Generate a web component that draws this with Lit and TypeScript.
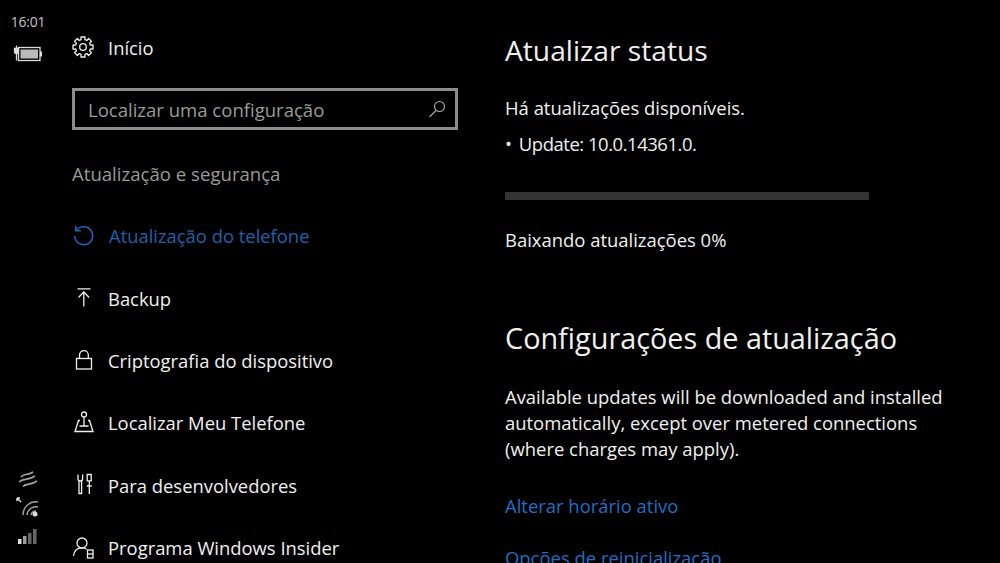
import { LitElement, html, css, svg } from "lit";
import { customElement } from "lit/decorators.js";

const ic = (w: number, h: number, body: unknown, cls = "") => html`<svg class=${cls} width=${w} height=${h} viewBox="0 0 ${w} ${h}" fill="none" stroke="currentColor" stroke-width="1.300">${body}</svg>`;

const gearPath = (() => {
  const pts: string[] = [];
  const n = 8;
  for (let i = 0; i < n; i++) {
    const a = (i * 2 * Math.PI) / n - Math.PI / 2;
    const seq: [number, number][] = [[7.6, -0.26], [10.2, -0.2], [10.2, 0.2], [7.6, 0.26]];
    for (const [r, d] of seq) {
      pts.push(`${(11 + r * Math.cos(a + d)).toFixed(2)} ${(11 + r * Math.sin(a + d)).toFixed(2)}`);
    }
  }
  return `M${pts.join("L")}Z`;
})();
const gear = ic(22, 22, svg`<circle cx="11" cy="11" r="3.300"/><path d=${gearPath} stroke-linejoin="round"/>`);

const items = [
  { label: "Atualização do telefone", active: true, icon: ic(24, 24, svg`<path d="M4.500 6.300A9 9 0 1 1 2.700 12" stroke-width="1.600"/><path d="M3.800 1.800v4.900h5" stroke-width="1.600"/>`) },
  { label: "Backup", icon: ic(24, 24, svg`<path d="M5.500 2.800h13M11.800 20.500V6M6.500 11.500 11.800 6l5.300 5.500"/>`) },
  { label: "Criptografia do dispositivo", icon: ic(24, 24, svg`<rect x="4.500" y="10.500" width="15" height="10.500"/><path d="M7.500 10.500V7a4.300 4.300 0 0 1 8.800 0v3.500"/>`) },
  { label: "Localizar Meu Telefone", icon: ic(24, 24, svg`<circle cx="12" cy="3.500" r="2.500"/><path d="M12 6v9M8 9.500H6.500L3 20.500h18L17.500 9.500H16M7.500 15h9"/>`) },
  { label: "Para desenvolvedores", icon: ic(24, 24, svg`<path d="M6 1.500v4.200a2.300 2.300 0 0 0 4.600 0V1.500M7 8v12.500h2.600V8M15 7.800h4.500M15.200 1.500h4v6.300h-4zM17.300 8v13M14.800 13h5"/>`) },
  { label: "Programa Windows Insider", icon: ic(24, 24, svg`<circle cx="10" cy="7" r="5"/><path d="M1.500 20c.5-5 3.700-8.200 8.500-8.200 1.800 0 3.400.5 4.700 1.400"/><rect x="15.500" y="14" width="5.500" height="8"/><path d="M15.500 18h5.500"/>`) },
];

@customElement("app-root")
export class AppRoot extends LitElement {
  static styles = css`
    :host { display: block; width: 1000px; height: 563px; overflow: hidden; background: #000; color: #f0f0f0; font-family: "Open Sans", "Noto Sans", sans-serif; }
    .page { display: flex; height: 563px; overflow: hidden; }
    .rail { width: 72px; flex: none; padding: 12px 16px 19px 0; box-sizing: border-box; height: 563px; color: #bbb; }
    .rail-in { display: flex; flex-direction: column; align-items: center; height: 100%; }
    .time { font-size: 13.900px; line-height: 20px; color: #c4c4c4; letter-spacing: -0.200px; }
    .batt { margin-top: 12px; }
    .spacer { flex: 1; }
    .low { display: flex; flex-direction: column; align-items: center; gap: 10px; color: #a0a0a0; }
    .nav { width: 386px; flex: none; }
    .row { display: flex; align-items: center; height: 62.400px; gap: 12px; font-size: 18.400px; white-space: nowrap; }
    .row svg { flex: none; }
    .home { height: 24px; margin-top: 35px; gap: 14px; }
    .active { color: #1f62ad; gap: 13px; }
    .search { margin-top: 29px; height: 42px; box-sizing: border-box; border: 3px solid #8c8c8c; display: flex; align-items: center; justify-content: space-between; padding: 0 9px 0 13px; color: #9a9a9a; font-size: 18.550px; }
    .search svg { color: #aaa; }
    .section { margin-top: 30px; margin-bottom: 16.500px; font-size: 18.600px; line-height: 28px; color: #999; }
    .main { margin-left: 47px; flex: 1; padding-top: 29px; }
    h1 { margin: 0; font-weight: 400; font-size: 28.200px; line-height: 42px; white-space: nowrap; }
    .txt { font-size: 18.450px; line-height: 26px; white-space: nowrap; }
    .t1 { margin-top: 24px; }
    .t2 { margin-top: 10px; letter-spacing: -0.450px; }
    .bullet { margin-right: 3px; }
    .bar { width: 364px; height: 8px; background: #333; margin-top: 35px; }
    .t3 { margin-top: 27px; }
    h1.h2 { margin-top: 64px; font-size: 28.800px; }
    .para { margin-top: 25px; }
    .link { color: #1f6fc4; margin-top: 31px; }
    .link + .link { margin-top: 26px; }
  `;
  render() {
    return html`<div class="page">
      <div class="rail"><div class="rail-in">
        <div class="time">16:01</div>
        <svg class="batt" width="30" height="18" viewBox="0 0 30 18" fill="none" stroke="#ddd" stroke-width="1.300"><rect x="5.500" y="3.500" width="21.500" height="13"/><rect x="7.500" y="5.500" width="17.500" height="9" fill="#bbb" stroke="none"/><path d="M28 7.500v5" stroke-width="2"/><path d="M3.500 1.500v3M3.500 10v6.500M5 13h1"/><path d="M1.500 4.500V7.500a2 2 0 0 0 4 0V4.500z" fill="#ddd"/></svg>
        <div class="spacer"></div>
        <div class="low">
          <svg width="20" height="16" viewBox="0 0 20 16" fill="none" stroke="currentColor" stroke-width="1.700"><path d="M3 6C6 2 9 5 15 1M1 11C5 7 10 10 17 5M5 15.500C8 12 12 15 19 10"/></svg>
          <svg width="24" height="22" viewBox="0 0 24 22" fill="none" stroke="currentColor" stroke-width="1.500"><path d="M1 1l4 4M1 1h3M1 1v3" stroke="#ddd"/><path d="M7 18a13 13 0 0 1 15-13M11 18a9 9 0 0 1 11-8M15 18a5 5 0 0 1 5-4"/><circle cx="19" cy="17" r="2.500" fill="#ddd" stroke="none"/></svg>
          <svg width="20" height="15" viewBox="0 0 20 15"><rect x="0" y="10" width="3.500" height="5" fill="#ddd"/><rect x="5" y="7" width="3.500" height="8" fill="#999"/><rect x="10" y="4" width="3.500" height="11" fill="#666"/><rect x="15" y="0" width="3.500" height="15" fill="#666"/></svg>
        </div>
      </div></div>
      <div class="nav">
        <div class="row home">${gear}<span>Início</span></div>
        <div class="search"><span>Localizar uma configuração</span>
          <svg width="18" height="18" viewBox="0 0 18 18" fill="none" stroke="currentColor" stroke-width="1.100"><circle cx="11.500" cy="6.500" r="5"/><path d="M8 10.500 1.500 17"/></svg></div>
        <div class="section">Atualização e segurança</div>
        ${items.map((i) => html`<div class="row ${i.active ? "active" : ""}">${i.icon}<span>${i.label}</span></div>`)}
      </div>
      <div class="main">
        <h1>Atualizar status</h1>
        <div class="txt t1">Há atualizações disponíveis.</div>
        <div class="txt t2"><span class="bullet">•</span> Update: 10.0.14361.0.</div>
        <div class="bar"></div>
        <div class="txt t3">Baixando atualizações 0%</div>
        <h1 class="h2">Configurações de atualização</h1>
        <div class="txt para">Available updates will be downloaded and installed<br />automatically, except over metered connections<br />(where charges may apply).</div>
        <div class="txt link">Alterar horário ativo</div>
        <div class="txt link">Opções de reinicialização</div>
      </div>
    </div>`;
  }
}
